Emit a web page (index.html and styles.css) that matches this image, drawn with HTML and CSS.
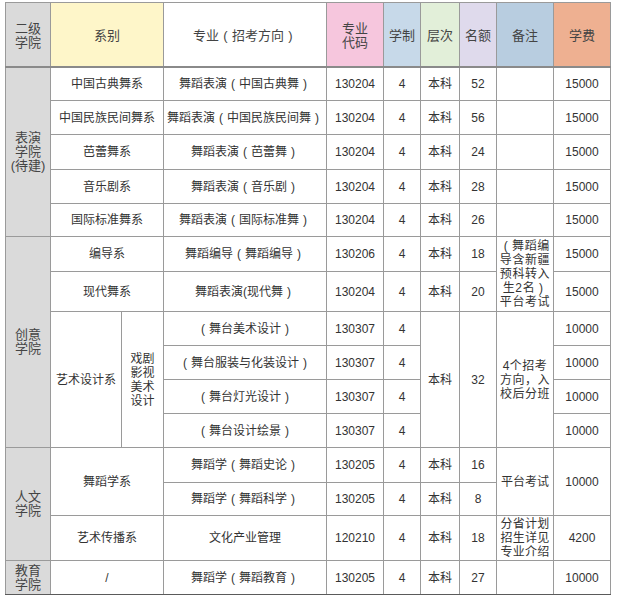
FILE: index.html
```html
<!DOCTYPE html>
<html lang="zh">
<head>
<meta charset="utf-8">
<link rel="stylesheet" href="styles.css">
</head>
<body>
<div class="wrap">
<table class="tbl">
  <colgroup>
    <col class="c1"><col class="c2a"><col class="c2b"><col class="c3"><col class="c4"><col class="c5"><col class="c6"><col class="c7"><col class="c8"><col class="c9">
  </colgroup>
  <thead>
    <tr class="hd">
      <th class="bg-grey">二级<br>学院</th>
      <th class="bg-yellow" colspan="2">系别</th>
      <th class="bg-white">专业<span class="p">(</span>招考方向<span class="p">)</span></th>
      <th class="bg-pink">专业<br>代码</th>
      <th class="bg-blue">学制</th>
      <th class="bg-green">层次</th>
      <th class="bg-lav">名额</th>
      <th class="bg-steel">备注</th>
      <th class="bg-salmon">学费</th>
    </tr>
  </thead>
  <tbody>
    <tr class="h34">
      <td class="bg-grey" rowspan="5">表演<br>学院<br>(待建)</td>
      <td colspan="2">中国古典舞系</td>
      <td>舞蹈表演<span class="p">(</span>中国古典舞<span class="p">)</span></td>
      <td>130204</td><td>4</td><td>本科</td><td>52</td><td></td><td>15000</td>
    </tr>
    <tr class="h34">
      <td colspan="2">中国民族民间舞系</td>
      <td>舞蹈表演<span class="p">(</span>中国民族民间舞<span class="p">)</span></td>
      <td>130204</td><td>4</td><td>本科</td><td>56</td><td></td><td>15000</td>
    </tr>
    <tr class="h35">
      <td colspan="2">芭蕾舞系</td>
      <td>舞蹈表演<span class="p">(</span>芭蕾舞<span class="p">)</span></td>
      <td>130204</td><td>4</td><td>本科</td><td>24</td><td></td><td>15000</td>
    </tr>
    <tr class="h34">
      <td colspan="2">音乐剧系</td>
      <td>舞蹈表演<span class="p">(</span>音乐剧<span class="p">)</span></td>
      <td>130204</td><td>4</td><td>本科</td><td>28</td><td></td><td>15000</td>
    </tr>
    <tr class="h33">
      <td colspan="2">国际标准舞系</td>
      <td>舞蹈表演<span class="p">(</span>国际标准舞<span class="p">)</span></td>
      <td>130204</td><td>4</td><td>本科</td><td>26</td><td></td><td>15000</td>
    </tr>
    <tr class="h35">
      <td class="bg-grey" rowspan="6">创意<br>学院</td>
      <td colspan="2">编导系</td>
      <td>舞蹈编导<span class="p">(</span>舞蹈编导<span class="p">)</span></td>
      <td>130206</td><td>4</td><td>本科</td><td>18</td>
      <td class="note" rowspan="2"><span class="p">(</span>舞蹈编<br>导含新疆<br>预科转入<br>生2名<span class="p">)</span><br>平台考试</td>
      <td>15000</td>
    </tr>
    <tr class="h40">
      <td colspan="2">现代舞系</td>
      <td>舞蹈表演(现代舞<span class="p">)</span></td>
      <td>130204</td><td>4</td><td>本科</td><td>20</td>
      <td>15000</td>
    </tr>
    <tr class="h34">
      <td rowspan="4">艺术设计系</td>
      <td rowspan="4" class="vert">戏剧<br>影视<br>美术<br>设计</td>
      <td><span class="p">(</span>舞台美术设计<span class="p">)</span></td>
      <td>130307</td><td>4</td>
      <td rowspan="4">本科</td>
      <td rowspan="4">32</td>
      <td rowspan="4" class="note2">4个招考<br>方向，入<br>校后分班</td>
      <td>10000</td>
    </tr>
    <tr class="h34">
      <td><span class="p">(</span>舞台服装与化装设计<span class="p">)</span></td>
      <td>130307</td><td>4</td>
      <td>10000</td>
    </tr>
    <tr class="h34">
      <td><span class="p">(</span>舞台灯光设计<span class="p">)</span></td>
      <td>130307</td><td>4</td>
      <td>10000</td>
    </tr>
    <tr class="h34">
      <td><span class="p">(</span>舞台设计绘景<span class="p">)</span></td>
      <td>130307</td><td>4</td>
      <td>10000</td>
    </tr>
    <tr class="h35">
      <td class="bg-grey" rowspan="3">人文<br>学院</td>
      <td colspan="2" rowspan="2">舞蹈学系</td>
      <td>舞蹈学<span class="p">(</span>舞蹈史论<span class="p">)</span></td>
      <td>130205</td><td>4</td><td>本科</td><td>16</td>
      <td rowspan="2">平台考试</td>
      <td rowspan="2">10000</td>
    </tr>
    <tr class="h33">
      <td>舞蹈学<span class="p">(</span>舞蹈科学<span class="p">)</span></td>
      <td>130205</td><td>4</td><td>本科</td><td>8</td>
    </tr>
    <tr class="h45">
      <td colspan="2">艺术传播系</td>
      <td>文化产业管理</td>
      <td>120210</td><td>4</td><td>本科</td><td>18</td>
      <td class="note3">分省计划<br>招生详见<br>专业介绍</td>
      <td>4200</td>
    </tr>
    <tr class="h34 last">
      <td class="bg-grey">教育<br>学院</td>
      <td colspan="2">/</td>
      <td>舞蹈学<span class="p">(</span>舞蹈教育<span class="p">)</span></td>
      <td>130205</td><td>4</td><td>本科</td><td>27</td>
      <td></td>
      <td>10000</td>
    </tr>
  </tbody>
</table>
</div>
</body>
</html>
```

FILE: styles.css
```css
html, body {
  margin: 0;
  padding: 0;
  background: #ffffff;
}

.wrap {
  padding: 2px 0 0 5px;
}

.tbl {
  border-collapse: collapse;
  table-layout: fixed;
  width: 605px;
  font-family: "Liberation Sans", "Noto Sans CJK SC", sans-serif;
  font-size: 12px;
  color: #333333;
  border: 1px solid #5a5a5a;
}

.c1 { width: 45px; }
.c2a { width: 71px; }
.c2b { width: 42px; }
.c3 { width: 163px; }
.c4 { width: 57px; }
.c5 { width: 37px; }
.c6 { width: 39px; }
.c7 { width: 37px; }
.c8 { width: 57px; }
.c9 { width: 57px; }

.tbl th,
.tbl td {
  border: 1px solid #9a9a9a;
  padding: 0;
  text-align: center;
  vertical-align: middle;
  line-height: 14px;
  font-weight: normal;
  white-space: nowrap;
  overflow: hidden;
}

.tbl th {
  font-size: 13px;
  color: #444444;
  border-bottom: 2px solid #8a8a8a;
  padding-top: 3px;
}

.p {
  display: inline-block;
  width: 1em;
  text-align: center;
}

.hd { height: 64px; }

.h33 { height: 33px; }
.h34 { height: 34px; }
.h35 { height: 35px; }
.h40 { height: 40px; }
.h45 { height: 45px; }

.tbl .bg-grey { background: #dadada; }
.bg-yellow { background: #fef6c9; }
.bg-white { background: #ffffff; }
.bg-pink { background: #f6c6dd; }
.bg-blue { background: #c7d9e9; }
.bg-green { background: #e2efd9; }
.bg-lav { background: #dfdaec; }
.bg-steel { background: #b8cde0; }
.bg-salmon { background: #eeb091; }

.tbl td.bg-grey {
  font-size: 13px;
  color: #444444;
}

.vert { line-height: 15px; }

.note {
  line-height: 13.5px;
  letter-spacing: 0.6px;
}

.note2 {
  line-height: 15px;
  letter-spacing: 0.5px;
}

.note3 {
  line-height: 14px;
  letter-spacing: 0.3px;
}

.last td { border-bottom: 1px solid #5a5a5a; }
```
